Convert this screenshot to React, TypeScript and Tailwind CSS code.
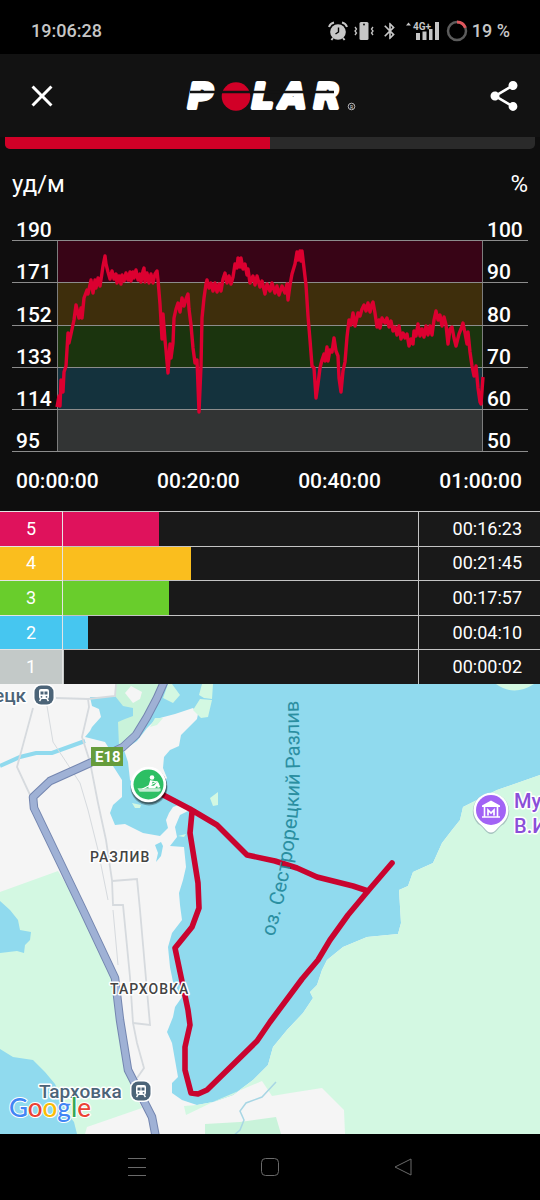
import type { ReactNode } from 'react';
import { MdBluetooth, MdClose, MdShare } from 'react-icons/md';

/* ---------- Data ---------- */

interface ScaleRow {
  bpm: number;
  percent: number;
  band: string;
}

// Each row ends with its own grid line; the band is the zone above that line
const SCALE: ScaleRow[] = [
  { bpm: 190, percent: 100, band: '' },
  { bpm: 171, percent: 90, band: 'bg-[#380416] border-x' },
  { bpm: 152, percent: 80, band: 'bg-[#3e2e0c] border-x' },
  { bpm: 133, percent: 70, band: 'bg-[#1b340e] border-x' },
  { bpm: 114, percent: 60, band: 'bg-[#14323d] border-x' },
  { bpm: 95, percent: 50, band: 'bg-[#323434] border-x' },
];

const TIMES = ['00:00:00', '00:20:00', '00:40:00', '01:00:00'];

interface Zone {
  id: number;
  time: string;
  color: string;
}

const ZONES: Zone[] = [
  { id: 5, time: '00:16:23', color: 'bg-[#df125c]' },
  { id: 4, time: '00:21:45', color: 'bg-[#fabe1e]' },
  { id: 3, time: '00:17:57', color: 'bg-[#69cd2c]' },
  { id: 2, time: '00:04:10', color: 'bg-[#46c6f0]' },
  { id: 1, time: '00:00:02', color: 'bg-[#c3c9c8]' },
];

const toSeconds = (time: string) => time.split(':').reduce((acc, part) => acc * 60 + Number(part), 0);

const TOTAL = ZONES.reduce((sum, zone) => sum + toSeconds(zone.time), 0);

const HEART_RATE =
  '57,407 59,396 60,406 61,380 63,392 64,372 66,366 68,333 69,343 71,334 74,320 76,305 79,318 81,308 82,318 84,298 ' +
  '87,290 88,294 91,280 93,293 95,280 96,288 98,278 100,286 102,273 103,266 105,256 106,264 108,272 110,279 112,271 ' +
  '114,279 116,274 117,283 119,276 121,284 122,275 124,281 126,273 128,280 130,272 131,281 133,272 134,278 136,270 ' +
  '138,280 140,274 141,282 143,271 144,268 145,282 147,273 149,283 151,274 153,283 155,274 157,271 158,280 160,304 ' +
  '162,339 163,314 165,340 166,350 168,373 170,344 171,358 173,343 174,318 176,309 178,303 180,312 182,298 184,306 ' +
  '186,299 188,294 189,309 191,325 193,348 195,363 197,360 199,412 201,366 202,318 204,298 206,284 207,280 209,288 ' +
  '211,283 213,291 215,283 217,292 219,284 221,291 223,279 225,273 227,283 229,276 231,284 233,277 235,264 237,268 ' +
  '238,258 240,267 241,258 243,269 245,264 247,275 248,269 250,283 253,276 255,285 257,276 260,287 262,281 265,294 ' +
  '267,284 270,291 272,283 275,293 277,286 279,295 282,286 285,293 287,284 288,300 290,285 292,274 295,264 297,252 ' +
  '298,260 300,251 301,261 302,251 304,268 306,285 308,316 310,340 312,366 314,368 316,398 318,384 320,368 322,360 ' +
  '324,354 325,361 327,347 328,361 330,350 332,352 334,338 336,351 338,356 339,378 341,392 343,371 345,362 347,337 ' +
  '349,320 351,325 353,313 355,326 358,313 360,316 362,309 364,305 366,311 368,303 370,312 372,304 373,302 375,313 ' +
  '377,327 379,320 380,328 382,318 385,323 387,318 389,327 391,321 393,331 395,327 397,335 399,326 401,339 403,333 ' +
  '405,338 407,334 409,346 411,339 413,344 414,331 416,336 418,324 420,336 422,329 424,337 426,326 428,335 430,326 ' +
  '432,335 434,320 436,311 438,320 440,315 442,326 444,317 446,325 448,344 450,329 452,327 454,338 456,346 459,334 ' +
  '461,329 463,323 465,333 467,344 468,332 470,352 472,366 474,376 476,366 478,388 480,402 481,404 483,377';

/* ---------- Status bar ---------- */

function AlarmIcon() {
  return (
    <svg viewBox="0 0 20 20" className="size-5" aria-hidden="true">
      <circle cx="10" cy="11" r="7.8" fill="currentColor" />
      <path d="M1 6a7 7 0 0 1 5-4.5M19 6a7 7 0 0 0-5-4.5M5 17l-1.600 2M15 17l1.600 2" fill="none" stroke="currentColor" strokeWidth="2" />
      <path d="M10.500 6.500V11L7.500 13" fill="none" stroke="#000" strokeWidth="1.400" />
    </svg>
  );
}

function VibrateIcon() {
  return (
    <svg viewBox="0 0 20 20" className="size-5" aria-hidden="true">
      <rect x="5.500" y="1" width="9" height="18" rx="1.500" fill="currentColor" />
      <circle cx="10" cy="3.500" r="0.900" fill="#000" />
      <path d="M1 6l1.500 2L1 10l1.500 2L1 14M19 6l-1.500 2 1.500 2-1.500 2 1.500 2" fill="none" stroke="currentColor" strokeWidth="1.300" />
    </svg>
  );
}

function SignalIcon() {
  return (
    <svg viewBox="0 0 34 20" className="h-5 w-[34px] overflow-visible" aria-hidden="true">
      <path d="M0 4.500l2.500-3 2.500 3z" fill="currentColor" />
      <text x="7" y="9" fill="currentColor" fontSize="10" fontWeight="700">
        4G+
      </text>
      <path d="M10 12h4v7h-4zM16.500 10.500h4V19h-4zM23 8h3.500v11H23zM29 1h4v18h-4z" fill="currentColor" />
    </svg>
  );
}

function BatteryRing() {
  return (
    <svg viewBox="0 0 22 22" className="size-[22px]" aria-hidden="true">
      <circle cx="11" cy="11" r="9" fill="none" stroke="#5c5c5c" strokeWidth="2.500" />
      <path d="M11 2a9 9 0 0 1 8.400 5.800" fill="none" stroke="#e0565c" strokeWidth="3" />
    </svg>
  );
}

function StatusBar() {
  return (
    <div className="flex h-[54px] items-center justify-between bg-black pt-2 pr-[30px] pl-[31px] text-lg font-medium text-[#c6c6c6]">
      <time>19:06:28</time>
      <div className="flex items-center gap-1.5">
        <AlarmIcon />
        <VibrateIcon />
        <MdBluetooth size={20} />
        <SignalIcon />
        <div className="flex items-center gap-1">
          <BatteryRing />
          <span>19 %</span>
        </div>
      </div>
    </div>
  );
}

/* ---------- Header ---------- */

function PolarLogo() {
  return (
    <svg viewBox="0 0 176 36" className="h-9 w-44 overflow-visible" role="img" aria-label="Polar">
      <g
        fill="#fff"
        stroke="#fff"
        strokeWidth="4"
        strokeLinejoin="round"
        fontFamily="DejaVu Sans"
        fontSize="34"
        fontWeight="700"
        fontStyle="italic"
      >
        <text x="3" y="30">P</text>
        <text x="67" y="30">L</text>
        <text x="95" y="30">A</text>
        <text x="129" y="30">R</text>
      </g>
      <circle cx="51" cy="18.500" r="14.300" fill="#d10027" />
      <path d="M5 14h144" stroke="#121212" strokeWidth="2.600" />
      <circle cx="166.500" cy="28.500" r="3.300" fill="none" stroke="#ddd" strokeWidth="0.800" />
      <text x="165" y="31" fill="#ddd" fontSize="5">
        R
      </text>
    </svg>
  );
}

function Header() {
  return (
    <header className="flex h-[83px] items-center justify-between bg-[#121212] pr-[18px] pl-6 text-white">
      <button type="button" aria-label="Закрыть">
        <MdClose size={36} />
      </button>
      <PolarLogo />
      <button type="button" aria-label="Поделиться">
        <MdShare size={36} />
      </button>
    </header>
  );
}

/* ---------- Heart rate chart ---------- */

function HeartRateChart() {
  return (
    <section className="text-white">
      <div className="flex h-[50px] items-center justify-between px-3 pt-5 text-2xl">
        <span>уд/м</span>
        <span>%</span>
      </div>

      <div className="relative mx-3 flex h-[253px] flex-col text-[21px] leading-5 font-medium">
        {SCALE.map((row) => (
          <div key={row.bpm} className="flex flex-1 border-b border-[#8c8c8c]">
            <span className="w-[45px] self-end pl-1">{row.bpm}</span>
            <div className={`flex-1 border-[#7d7d7d] ${row.band}`} />
            <span className="w-[45px] self-end pl-1">{row.percent}</span>
          </div>
        ))}
        <svg
          viewBox="12 199 516 253"
          preserveAspectRatio="none"
          className="absolute inset-0 h-full w-full"
          aria-hidden="true"
        >
          <polyline points={HEART_RATE} fill="none" stroke="#dc0030" strokeWidth="3.400" strokeLinejoin="round" />
        </svg>
      </div>

      <div className="flex h-[59px] items-center justify-between pr-[18px] pl-4 text-[21px] font-medium">
        {TIMES.map((time) => (
          <time key={time}>{time}</time>
        ))}
      </div>
    </section>
  );
}

/* ---------- Zones ---------- */

function ZoneTable() {
  return (
    <table className="h-[173px] w-full table-fixed border-separate border-spacing-0 bg-[#191919] text-lg leading-6 text-white">
      <colgroup>
        <col className="w-[63px]" />
        <col />
        <col className="w-[122px]" />
      </colgroup>
      <tbody>
        {ZONES.map((zone) => (
          <tr key={zone.id}>
            <th
              scope="row"
              className={`h-[34px] border-t border-r border-[#e4e4e4] p-0 text-center font-normal ${zone.color}`}
            >
              {zone.id}
            </th>
            <td className="h-[34px] border-t border-[#c4c4c4] p-0">
              <div
                className={`h-full ${zone.color}`}
                style={{ width: `${(toSeconds(zone.time) / TOTAL) * 100}%` }}
              />
            </td>
            <td className="h-[34px] border-t border-l border-[#c4c4c4] py-0 pr-[18px] pl-0 text-right">{zone.time}</td>
          </tr>
        ))}
      </tbody>
    </table>
  );
}

/* ---------- Map ---------- */

function Label({ x, y, size, color, children }: { x: number; y: number; size: number; color: string; children: ReactNode }) {
  return (
    <text
      x={x}
      y={y}
      fontSize={size}
      fontWeight="500"
      fill={color}
      stroke="#fff"
      strokeWidth="3"
      strokeLinejoin="round"
      paintOrder="stroke"
    >
      {children}
    </text>
  );
}

function Station({ x, y }: { x: number; y: number }) {
  return (
    <g transform={`translate(${x} ${y})`}>
      <rect x="-11" y="-11" width="22" height="22" rx="8" fill="#fff" />
      <rect x="-9.500" y="-9.500" width="19" height="19" rx="6.500" fill="#4c6478" />
      <rect x="-5" y="-6" width="10" height="10" rx="2" fill="#fff" />
      <path d="M-3.500-3.500h3v3h-3zM.5-3.500h3v3h-3z" fill="#4c6478" />
      <circle cx="-2.500" cy="1.800" r="0.900" fill="#4c6478" />
      <circle cx="2.500" cy="1.800" r="0.900" fill="#4c6478" />
      <path d="M-3 4l-1.500 2M3 4l1.500 2" stroke="#fff" strokeWidth="1.400" />
    </g>
  );
}

function RowingMarker() {
  return (
    <g transform="translate(148.500 784.500)">
      <circle cx="0.500" cy="2.500" r="18.500" fill="#000" opacity="0.300" />
      <circle cx="0.500" cy="1.500" r="18" fill="#000" opacity="0.400" />
      <circle r="17.800" fill="#fff" />
      <circle r="15" fill="#2dbf64" />
      <circle cx="3.500" cy="-7" r="2.300" fill="#fff" />
      <path d="M3-4L1 2.500h5L9-1l1.500 4" fill="none" stroke="#fff" strokeWidth="2.600" strokeLinejoin="round" />
      <path d="M3-3.500l6 1M-7 5L9-3" stroke="#fff" strokeWidth="1.200" />
      <path d="M-11 4h23v2.500l-2 .5h-19z" fill="#fff" />
      <path d="M-11 5.500h23" stroke="#2dbf64" strokeWidth="0.600" />
    </g>
  );
}

function MuseumPin() {
  return (
    <g transform="translate(491 810)">
      <path d="M0 24c-5 0-7-7-13-10a18.200 18.200 0 1 1 26 0c-6 3-8 10-13 10z" fill="#64748b" opacity="0.400" />
      <path d="M0 22.500c-4.500 0-6-5-12-9.500a17.500 17.500 0 1 1 24 0c-6 4.500-7.500 9.500-12 9.500z" fill="#fff" />
      <circle r="15" fill="#a263f5" />
      <path d="M-9-4.500L0-9.500 9-4.500v1.500H-9z" fill="#fff" />
      <path d="M-6.500-3v10M6.500-3v10M-9 7H9" stroke="#fff" strokeWidth="1.600" />
      <path d="M-3 5.500V0L0 3l3-3v5.500" fill="none" stroke="#fff" strokeWidth="1.700" />
    </g>
  );
}

function RouteMap() {
  return (
    <section aria-label="Карта маршрута">
      <svg viewBox="0 684 540 450" preserveAspectRatio="xMidYMid slice" className="h-[450px] w-full">
        <rect y="684" width="540" height="450" fill="#90daee" />

        {/* Land */}
        <path
          fill="#f5f5f5"
          d="M0 684H116L115 697 90 697 92 706 99 709 101 717 92 727 90 731 85 737 105 742 110 750 106 756 113 766 122 780 122 797 113 805 110 813 115 825 125 824 143 833 160 836 168 828 166 820 169 813 173 807 181 804 190 810 180 815 175 827 177 837 170 846 184 847 186 867 183 880 179 893 180 905 182 920 172 933 168 947 170 967 173 982 182 997 175 1007 173 1017 167 1032 172 1043 175 1060 178 1077 172 1083 172 1093 182 1100 197 1105 213 1102 233 1095 253 1080 268 1065 273 1047 287 1030 303 1013 313 998 310 992 317 985 322 970 327 960 343 947 367 937 398 934 401 923 399 890 408 886 413 872 433 863 442 843 452 830 460 820 463 807 497 790 540 775V1134H0z"
        />
        <path
          fill="#f5f5f5"
          d="M124 750L137 741 147 728 156 719 175 714 193 708 198 714 197 719 187 729 181 735 179 746 170 750 164 757 163 768 167 778 160 786 140 790 130 780 128 762z"
        />
        <path fill="#90daee" d="M155 845l6-3 2 4-2 10-5 6 2-9z" />
        <path fill="#c9f3da" d="M116 684h46l-16 31-11 21-16 10-1-24 7-3 8-3v-8l-10-2-8-10z" />
        <path fill="#f5f5f5" d="M125 693l6-7 11 6-2 7-7 4z" />
        <path fill="#d3f8e2" d="M168 684h4l8 11-7 8-10-5zM202 684h11l-1 15-8-1-5-3zM200 699l12 1-4 17-7 1-8-8zM210 798l8-6v13l-5 1zM150 727l5-9 8 0-6 7zM132 803l9 2-1 3-5 0zM178 836l8-2-2 3z" />
        <path fill="#d3f8e2" d="M496 684h38q-20 13-38 0z" />
        <path
          fill="#d3f8e2"
          d="M0 892L58 871 82 910 115 980 120 1020 128 1070 131 1088 142 1108 87 1127 85 1134H0z"
        />
        <path
          fill="#d3f8e2"
          d="M184 1106L197 1105 213 1102 233 1095 253 1080 268 1065 273 1047 287 1030 303 1013 313 998 310 992 317 985 322 970 327 960 343 947 367 937 398 934 401 923 399 890 408 886 413 872 433 863 442 843 452 830 460 820 463 807 497 790 540 775V1134H345L344 1110 322 1088 290 1093 272 1096 262 1081 215 1101 186 1115z"
        />
        <path fill="#c9f3da" d="M205 1124L240 1122 276 1117 281 1134H205z" />
        <path fill="#90daee" d="M0 901L10 910 18 920 20 930 31 932 30 940 25 945 24 953 17 951 0 953z" />
        <path fill="#90daee" d="M0 1049L13 1057 33 1060 45 1072 55 1084 60 1095 66 1112 74 1122 77 1134H0z" />
        <path fill="none" stroke="#90daee" strokeWidth="4" d="M0 766L20 757 36 753 52 753 85 741" />
        <path fill="none" stroke="#a8d6e4" strokeWidth="1.500" d="M276 1082l-14 15-16 6-6 8 4 9-4 10-8 7" />

        {/* Streets */}
        <g fill="none" stroke="#d6dade" strokeWidth="1.800">
          <path d="M56 698L88 699 89 707 82 737 90 762 98 803 106 840 112 880 113 905 123 905 130 977 133 1023 137 1043 144 1068 137 1078" />
          <path d="M33 708L17 767 31 797" />
          <path d="M112 881L137 879 140 910 150 1025 133 1023" />
          <path d="M88 699L115 696 116 684" />
          <path strokeWidth="1" d="M47 706L53 742 80 783 88 810 98 850 108 900M113 910L118 965" />
        </g>

        {/* Highway */}
        <g fill="none" strokeLinejoin="round">
          <path
            stroke="#7486b0"
            strokeWidth="8.500"
            d="M165 680L157 698 147 717 136 735 123 747 90 763 50 781 33 797 34 808 83 910 115 978 120 1020 128 1070 152 1117 156 1138"
          />
          <path
            stroke="#9fb1d5"
            strokeWidth="6.500"
            d="M165 680L157 698 147 717 136 735 123 747 90 763 50 781 33 797 34 808 83 910 115 978 120 1020 128 1070 152 1117 156 1138"
          />
        </g>
        <rect x="91" y="747" width="32" height="19" fill="#669c3b" />
        <text x="95" y="762" fontSize="15" fontWeight="700" fill="#fff">
          E18
        </text>

        {/* Recorded track */}
        <path
          fill="none"
          stroke="#c9042f"
          strokeWidth="5.600"
          strokeLinejoin="round"
          strokeLinecap="round"
          d="M148 787L190 809 217 825 247 855 275 861 297 868 317 877 353 886 368 891M392 863L368 891 348 915 330 940 318 960 302 979 270 1022 257 1041 207 1090 198 1094 191 1093 185 1070 185 1047 190 1025 188 1010 175 948 192 927 199 908 198 883 190 833 192 812"
        />

        <path id="lake" fill="none" d="M274 937Q299 850 300 770L298 684" />
        <text fontSize="20" fill="#1f8799" opacity="0.900">
          <textPath href="#lake">оз. Сестрорецкий Разлив</textPath>
        </text>

        <Station x={44} y={695} />
        <Station x={141} y={1091} />
        <Label x={-6} y={702} size={19} color="#4c6478">ецк</Label>
        <Label x={39} y={1098} size={19} color="#4c6478">Тарховка</Label>
        <g letterSpacing="1">
          <Label x={90} y={862} size={14} color="#444">РАЗЛИВ</Label>
          <Label x={110} y={994} size={14} color="#444">ТАРХОВКА</Label>
        </g>
        <Label x={514} y={808} size={20} color="#8a4fd8">Музей</Label>
        <Label x={514} y={833} size={20} color="#8a4fd8">В.И.</Label>
        <RowingMarker />
        <MuseumPin />

        <text x="9" y="1117" fontSize="26" fontWeight="500" fontFamily="Lato" stroke="#fff" strokeWidth="2" paintOrder="stroke">
          <tspan fill="#4285f4">G</tspan>
          <tspan fill="#ea4335">o</tspan>
          <tspan fill="#fbbc05">o</tspan>
          <tspan fill="#4285f4">g</tspan>
          <tspan fill="#34a853">l</tspan>
          <tspan fill="#ea4335">e</tspan>
        </text>
      </svg>
    </section>
  );
}

/* ---------- System navigation ---------- */

function SystemNav() {
  return (
    <nav className="flex h-[66px] items-center justify-center bg-black text-[#6a6a6a]">
      <button type="button" aria-label="Меню" className="flex w-[133px] justify-center">
        <svg viewBox="0 0 20 20" className="size-5" fill="none" stroke="currentColor">
          <path d="M1 1.500h18M1 10.500h18M1 18.500h18" />
        </svg>
      </button>
      <button type="button" aria-label="Домой" className="flex w-[133px] justify-center">
        <svg viewBox="0 0 20 20" className="size-5" fill="none" stroke="currentColor">
          <rect x="1.500" y="1.500" width="17" height="17" rx="4" />
        </svg>
      </button>
      <button type="button" aria-label="Назад" className="flex w-[133px] justify-center">
        <svg viewBox="0 0 20 20" className="size-5" fill="none" stroke="currentColor" strokeLinejoin="round">
          <path d="M18 2v16L2 10z" />
        </svg>
      </button>
    </nav>
  );
}

export default function App() {
  return (
    <main className="min-h-screen w-full bg-[#0e0e0e] font-['Roboto','Noto_Sans',sans-serif]">
      <StatusBar />
      <Header />
      <div
        role="progressbar"
        aria-label="Загрузка"
        aria-valuenow={50}
        className="mx-[5px] h-3 overflow-hidden rounded-b-[5px] bg-[#2a2a2a]"
      >
        <div className="h-full w-1/2 bg-[#d10027]" />
      </div>
      <HeartRateChart />
      <ZoneTable />
      <RouteMap />
      <SystemNav />
    </main>
  );
}
